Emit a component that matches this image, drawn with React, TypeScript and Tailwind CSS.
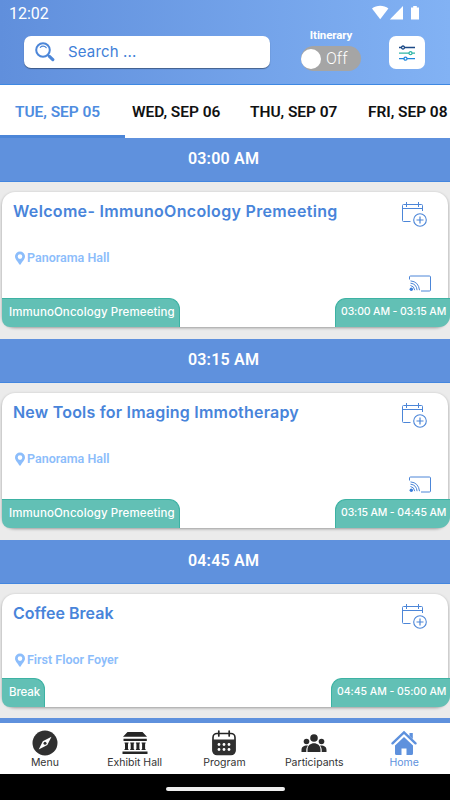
import React from 'react';

type Session = {
  start: string;
  title: string;
  place: string;
  tag: string;
  time: string;
  cast: boolean;
  tagClass: string;
  timeClass: string;
  titleClass: string;
};

const sessions: Session[] = [
  {
    start: '03:00 AM',
    title: 'Welcome- ImmunoOncology Premeeting',
    place: 'Panorama Hall',
    tag: 'ImmunoOncology Premeeting',
    time: '03:00 AM - 03:15 AM',
    cast: true,
    tagClass: 'w-[178px] tracking-[0.1px]',
    timeClass: 'w-[115px] tracking-[-0.13px]',
    titleClass: 'tracking-[0.33px]',
  },
  {
    start: '03:15 AM',
    title: 'New Tools for Imaging Immotherapy',
    place: 'Panorama Hall',
    tag: 'ImmunoOncology Premeeting',
    time: '03:15 AM - 04:45 AM',
    cast: true,
    tagClass: 'w-[178px] tracking-[0.1px]',
    timeClass: 'w-[115px] tracking-[-0.13px]',
    titleClass: 'tracking-[0.21px]',
  },
  {
    start: '04:45 AM',
    title: 'Coffee Break',
    place: 'First Floor Foyer',
    tag: 'Break',
    time: '04:45 AM - 05:00 AM',
    cast: false,
    tagClass: 'w-[43px] tracking-[-0.1px]',
    timeClass: 'w-[119px] tracking-[-0.05px]',
    titleClass: 'tracking-[0.02px]',
  },
];

const StatusIcons = () => (
  <svg width="50" height="16" viewBox="0 0 50 16" fill="white">
    <path d="M0 3.6C4.6-.2 11.800-.2 16.400 3.600L8.200 14.300Z" />
    <path d="M31 1v13.500H17.800Z" />
    <path d="M41.200 1h3.600v1.600h2.200v12h-8v-12h2.200Z" />
  </svg>
);

const SearchIcon = () => (
  <svg width="20" height="20" viewBox="0 0 20 20" fill="none" stroke="#4c86d8">
    <circle cx="8" cy="8" r="6.800" strokeWidth="2" />
    <path d="M5.300 5.300C6.800 3.700 9.600 3.800 11.200 5.700" strokeWidth="1.200" strokeLinecap="round" />
    <path d="m12.900 12.900 1.700 1.700" strokeWidth="1.800" />
    <path d="m14.400 14.400 3.400 3.200" strokeWidth="3.200" strokeLinecap="round" />
  </svg>
);

const FilterIcon = () => (
  <svg width="16" height="16" viewBox="0 0 16 16" fill="none" strokeWidth="1.300">
    <path d="M0 2.500h2.500M5.500 2.500H16" stroke="#1c4a86" />
    <circle cx="4" cy="2.500" r="1.500" stroke="#1c4a86" />
    <path d="M0 8.200h10M13 8.200h3" stroke="#2fb6a6" />
    <circle cx="11.500" cy="8.200" r="1.500" stroke="#2fb6a6" />
    <path d="M0 13.700h5M8 13.700h8" stroke="#1f87dc" />
    <circle cx="6.500" cy="13.700" r="1.500" stroke="#1f87dc" />
  </svg>
);

const CalendarPlus = () => (
  <svg width="26" height="26" viewBox="0 0 26 26" fill="none" stroke="#4c86d8">
    <path d="M9.500 20.500H2.500Q1.500 20.500 1.500 19.500V4.500Q1.500 3.500 2.500 3.500H20.500Q21.500 3.500 21.500 4.500V10M1.500 7.500h20" />
    <path d="M5.500 1v5M17.500 1v5" />
    <circle cx="19" cy="19" r="6.300" strokeWidth="1.100" />
    <path d="M19 15.500v7M15.500 19h7" strokeWidth="1.200" />
  </svg>
);

const CastIcon = () => (
  <svg width="22" height="17" viewBox="0 0 22 17" fill="none" stroke="#4c86d8">
    <path d="M.5 4.500V2Q.5 1 1.500 1H20.500Q21.500 1 21.500 2V15Q21.500 16 20.500 16H12" />
    <circle cx="2.300" cy="14.300" r="1.700" fill="#3b7ddb" stroke="none" />
    <path d="M1.500 10.500Q5.200 11 5.700 15.200M1.500 8.200Q7.400 8.700 8.100 15.200M1.500 5.900Q9.500 6.500 10.500 15.200" />
  </svg>
);

const PinIcon = () => (
  <svg width="10" height="14" viewBox="0 0 10 14" fill="#8cbdfb">
    <path
      fillRule="evenodd"
      d="M5 .5A5 5 0 0 0 0 5.500C0 8.500 3 10.500 4 13Q5 14.300 6 13C7 10.500 10 8.500 10 5.500A5 5 0 0 0 5 .5ZM5 3.300A2.300 2.300 0 1 1 5 7.900A2.300 2.300 0 0 1 5 3.300Z"
    />
  </svg>
);

const CompassIcon = () => (
  <svg width="26" height="26" viewBox="0 0 26 26">
    <circle cx="13" cy="13" r="12.500" fill="#303030" />
    <path d="M19.500 6.800 15.300 15 6.700 19.400 10.800 11.200Z" fill="white" />
    <circle cx="13" cy="13.200" r="1.500" fill="#303030" />
  </svg>
);

const HallIcon = () => (
  <svg width="26" height="26" viewBox="0 0 26 26" fill="#252525">
    <path d="M5.500 2h15L25 6.800H1ZM1.500 8.800h23.300v2.300H1.500ZM2.500 12.500h4v1h-.5v5.500h.5v1h-4v-1H3v-5.500h-.5ZM8.200 12.500h4v1h-.5v5.500h.5v1h-4v-1h.5v-5.500h-.5ZM13.900 12.500h4v1h-.5v5.500h.5v1h-4v-1h.5v-5.500h-.5ZM19.600 12.500h4v1h-.5v5.500h.5v1h-4v-1h.5v-5.500h-.5ZM.5 21.500h25V24H.5Z" />
  </svg>
);

const ProgramIcon = () => (
  <svg width="26" height="26" viewBox="0 0 26 26">
    <rect x="2" y="3.500" width="22" height="21" rx="4" fill="none" stroke="#252525" strokeWidth="1.600" />
    <path d="M1.500 9.500h23V20a5 5 0 0 1-5 5h-13a5 5 0 0 1-5-5Z" fill="#303030" />
    <path d="M7.800 1v5M18.200 1v5" stroke="#252525" strokeWidth="1.700" strokeLinecap="round" />
    <g fill="white">
      <circle cx="8" cy="14.500" r="1.400" />
      <circle cx="13" cy="14.500" r="1.400" />
      <circle cx="18" cy="14.500" r="1.400" />
      <circle cx="8" cy="19.500" r="1.400" />
      <circle cx="13" cy="19.500" r="1.400" />
      <circle cx="18" cy="19.500" r="1.400" />
    </g>
  </svg>
);

const PeopleIcon = () => (
  <svg width="26" height="26" viewBox="0 0 26 26" fill="#2b2b2b">
    <circle cx="13" cy="8" r="3.800" />
    <circle cx="5.500" cy="11.500" r="2.800" />
    <circle cx="20.500" cy="11.500" r="2.800" />
    <path d="M6.500 22v-2.500C6.500 11 19.500 11 19.500 19.500V22ZM.5 22v-2c0-3 2-4.700 6.500-4.500C5.800 17 5.300 18.500 5.300 20v2ZM25.500 22v-2c0-3-2-4.700-6.500-4.500 1.200 1.500 1.700 3 1.700 4.500v2Z" />
  </svg>
);

const HomeIcon = () => (
  <svg width="26" height="26" viewBox="0 0 26 26" fill="#5e91dd">
    <path d="M1.500 13.300 13 2.300l11.500 11" fill="none" stroke="#5e91dd" strokeWidth="2.400" strokeLinecap="round" />
    <path d="M18.500 3h3.300v6l-3.300-3Z" />
    <path d="M13 7 22 15.600V23.500Q22 25 20.500 25H15.500V18.500H10.500V25H5.500Q4 25 4 23.500V15.600Z" />
  </svg>
);

const navItems = [
  { label: 'Menu', Icon: CompassIcon, active: false },
  { label: 'Exhibit Hall', Icon: HallIcon, active: false },
  { label: 'Program', Icon: ProgramIcon, active: false },
  { label: 'Participants', Icon: PeopleIcon, active: false },
  { label: 'Home', Icon: HomeIcon, active: true },
];

const SessionBlock = ({ s }: { s: Session }) => (
  <section>
    <div className="h-[44px] bg-[#5f91dd] border-b border-[#4386df] flex items-center justify-center pr-[3px] pb-[2px] font-['Roboto',sans-serif] text-[16px] font-semibold tracking-[0.2px] text-white">
      {s.start}
    </div>
    <div className={`${s.cast ? 'pb-[12px]' : 'pb-[11px]'} pt-[10px] px-[2px]`}>
      <article
        className={`${s.cast ? 'h-[135px]' : 'h-[113px]'} bg-white rounded-[13px] shadow-[0_1px_3px_rgba(0,0,0,0.35)] flex flex-col justify-between`}
      >
        <div className="flex justify-between pl-[11px] pr-[20px] pt-[7px]">
          <div>
            <h2 className={`text-[16px] leading-[24px] font-semibold text-[#4884da] whitespace-nowrap ${s.titleClass}`}>{s.title}</h2>
            <div className="mt-[26px] ml-[2px] flex items-center gap-[2px] h-[18px] font-['Roboto',sans-serif] text-[12.500px] font-semibold text-[#8cbdfb]">
              <PinIcon />
              <span>{s.place}</span>
            </div>
          </div>
          <div className="flex flex-col items-end pt-[2px]">
            <div className="mr-[1px]">
              <CalendarPlus />
            </div>
            {s.cast && (
              <div className="mt-[48px] -mr-[3px]">
                <CastIcon />
              </div>
            )}
          </div>
        </div>
        <div className="flex justify-between -mr-[2px] leading-[26px] font-medium text-white whitespace-nowrap">
          <span className={`${s.tagClass} h-[29px] pl-[7px] text-[11.500px] bg-[#62c0b5] border-t border-r border-[#3db2a3] rounded-tr-[11px] rounded-bl-[8px]`}>
            {s.tag}
          </span>
          <span className={`${s.timeClass} h-[29px] pl-[5px] text-[10.500px] bg-[#62c0b5] border-t border-l border-[#3db2a3] rounded-tl-[11px] rounded-br-[11px]`}>
            {s.time}
          </span>
        </div>
      </article>
    </div>
  </section>
);

const App: React.FC = () => {
  return (
    <div className="w-[450px] h-[800px] overflow-hidden flex flex-col bg-[#ebebeb] font-['Inter',sans-serif]">
      {/* Header */}
      <header className="h-[85px] shrink-0 bg-linear-to-r from-[#608fdc] to-[#82b2f4] border-b border-[#3e88e2]">
        <div className="h-[28px] flex justify-between pl-[9px] pr-[28px] pt-[5px]">
          <span className="font-['Roboto',sans-serif] text-[16px] leading-[18px] text-white">12:02</span>
          <StatusIcons />
        </div>
        <div className="flex items-start pl-[24px]">
          <div className="mt-[8px] w-[246px] h-[32px] bg-white rounded-[7px] shadow-[0_1px_1px_rgba(0,0,0,0.4)] flex items-center pl-[11px]">
            <SearchIcon />
            <span className="ml-[13px] text-[15px] tracking-[0.15px] text-[#3f80d8]">Search ...</span>
          </div>
          <div className="ml-[31px] w-[60px] flex flex-col items-center font-['Roboto',sans-serif] text-white">
            <span className="text-[11.500px] leading-[14px] font-bold tracking-[-0.1px]">Itinerary</span>
            <div className="mt-[4px] w-[60px] h-[25px] rounded-full bg-[#a5a5a5] flex items-center">
              <span className="w-[20px] h-[20px] rounded-full bg-white" />
              <span className="ml-[5px] text-[16px] leading-[20px] font-light">Off</span>
            </div>
          </div>
          <div className="ml-[28px] mt-[8px] w-[36px] h-[33px] rounded-[7px] bg-white flex items-center justify-center">
            <FilterIcon />
          </div>
        </div>
      </header>

      {/* Day tabs */}
      <nav className="h-[53px] shrink-0 bg-white flex font-['Roboto',sans-serif] text-[15.500px] font-semibold tracking-[-0.05px] text-[#111] whitespace-nowrap leading-[55px]">
        <span className="w-[125px] shrink-0 pl-[15px] text-[#4e8ce0] border-b-[3px] border-[#4c86d8]">TUE, SEP 05</span>
        <span className="w-[125px] shrink-0 pl-[7px]">WED, SEP 06</span>
        <span className="w-[118px] shrink-0">THU, SEP 07</span>
        <span className="shrink-0">FRI, SEP 08</span>
      </nav>

      {/* Sessions */}
      <main className="flex-1 min-h-0 overflow-hidden">
        {sessions.map((s) => (
          <SessionBlock key={s.start} s={s} />
        ))}
        <div className="h-[44px] bg-[#5f91dd]" />
      </main>

      {/* Bottom navigation */}
      <footer className="h-[51px] shrink-0 bg-white flex pt-[7px] pr-px">
        {navItems.map(({ label, Icon, active }) => (
          <div key={label} className={`flex-1 flex flex-col items-center text-[10.500px] leading-[14px] ${active ? 'text-[#5e91dd]' : 'text-[#333]'}`}>
            <Icon />
            <span>{label}</span>
          </div>
        ))}
      </footer>

      <div className="h-[26px] shrink-0 bg-black flex justify-center pt-[13px]">
        <span className="w-[119px] h-[4px] rounded-full bg-[#eee]" />
      </div>
    </div>
  );
};

export default App;
